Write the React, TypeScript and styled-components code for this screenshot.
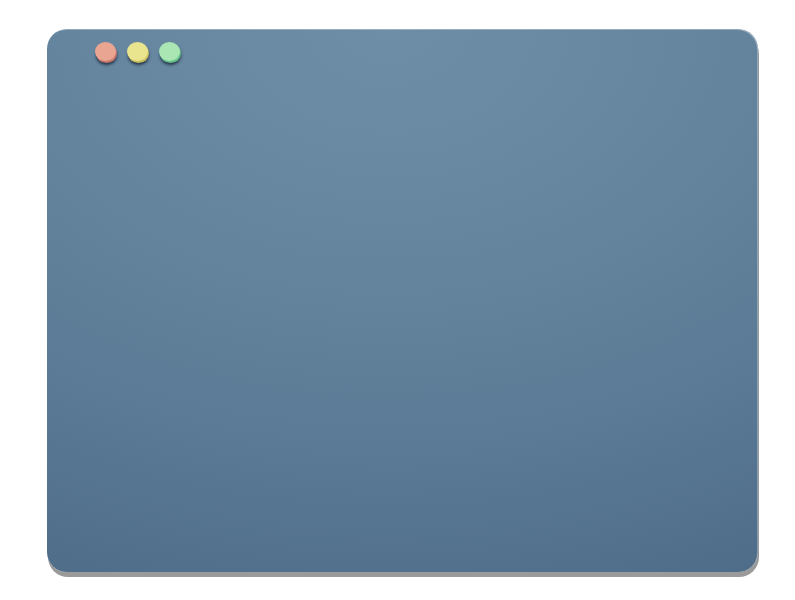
import React from "react";
import styled, { createGlobalStyle } from "styled-components";

const Global = createGlobalStyle`
  html, body { margin: 0; padding: 0; background: #ffffff; font-family: "Liberation Sans", Arial, sans-serif; }
`;

const Page = styled.div`
  width: 795px;
  height: 600px;
  padding: 29px 0 0 47px;
  box-sizing: border-box;
  background: #ffffff;
`;

const Window = styled.div`
  width: 711px;
  height: 543px;
  border-radius: 20px;
  background: radial-gradient(ellipse 120% 110% at 48% 0%, #6e8ea7 0%, #66869f 35%, #5b7a95 70%, #4f6d89 100%);
  box-shadow: 1px 5px 0 #9a9a9a, inset -1px 1px 0 rgba(255, 255, 255, 0.3);
  display: flex;
  flex-direction: column;
`;

const TitleBar = styled.div`
  display: flex;
  gap: 11px;
  padding: 13px 0 0 48px;
`;

const Dot = styled.div<{ $face: string; $side: string }>`
  width: 21px;
  height: 19px;
  border-radius: 50%;
  background: ${(p) => p.$face};
  box-shadow: 1px 2px 0 ${(p) => p.$side}, 1px 4px 3px rgba(25, 38, 56, 0.85);
`;

export default function App() {
  return (
    <>
      <Global />
      <Page>
        <Window>
          <TitleBar>
            <Dot $face="#e9a592" $side="#c8796b" />
            <Dot $face="#e9e58f" $side="#c9c15f" />
            <Dot $face="#a9e6b4" $side="#69c28a" />
          </TitleBar>
        </Window>
      </Page>
    </>
  );
}
